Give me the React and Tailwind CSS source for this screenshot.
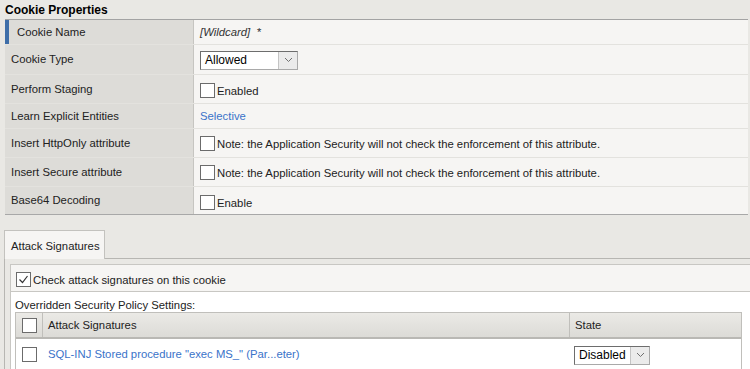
import React from "react";

function Box({ checked = false }) {
  return (
    <span className="inline-flex items-center justify-center w-[15px] h-[15px] bg-white border border-[#6b6b6b] shrink-0">
      {checked && (
        <svg width="11" height="11" viewBox="0 0 11 11">
          <path d="M1.5 5.5 L4.5 8.5 L9.5 2" fill="none" stroke="#333" strokeWidth="1.2" />
        </svg>
      )}
    </span>
  );
}

function Select({ value, width }) {
  return (
    <span className={`inline-flex items-stretch h-[19px] bg-white border border-[#a9a9a9] border-t-[#6d6d6d] border-l-[#6d6d6d] ${width}`}>
      <span className="flex-1 pl-[4px] leading-[17px] text-[12px] text-black">{value}</span>
      <span className="w-[19px] flex items-center justify-center bg-[#ebebeb] border-l border-[#c4c4c4]">
        <svg width="9" height="6" viewBox="0 0 9 6">
          <path d="M1 1 L4.5 4.5 L8 1" fill="none" stroke="#707070" strokeWidth="1" />
        </svg>
      </span>
    </span>
  );
}

function Row({ label, h, children, active = false, last = false }) {
  return (
    <div className={`flex ${last ? "" : "border-b border-[#e3e2de]"} ${h}`}>
      <div className={`w-[189px] shrink-0 bg-[#dddcd8] border-r border-[#c6c5c1] flex items-center ${active ? "border-l-[4px] border-l-[#3e6ea8] pl-[8px]" : "pl-[6px]"}`}>
        {label}
      </div>
      <div className="flex-1 bg-[#f6f5f3] flex items-center pl-[6px]">{children}</div>
    </div>
  );
}

const note = "Note: the Application Security will not check the enforcement of this attribute.";

export default function App() {
  return (
    <div className="w-[750px] h-[369px] overflow-hidden bg-[#e9e8e4] text-[11.3px] text-[#222] font-['Liberation_Sans',Arial,sans-serif]">
      <div className="h-[19px] pl-[5px] pt-[1px] font-bold text-[12px] text-black">Cookie Properties</div>
      <div className="ml-[5px] mr-[2px] border-t border-[#a3a3a3] border-b border-b-[#a8a8a8]">
        <Row label="Cookie Name" h="h-[25px]" active>
          <span className="italic text-[#333]">[Wildcard]&nbsp; *</span>
        </Row>
        <Row label="Cookie Type" h="h-[30px]">
          <Select value="Allowed" width="w-[98px] mt-[1px]" />
        </Row>
        <Row label="Perform Staging" h="h-[29px]">
          <span className="flex items-end gap-[2px] mt-[3px]">
            <Box />
            <span className="leading-[13px]">Enabled</span>
          </span>
        </Row>
        <Row label="Learn Explicit Entities" h="h-[25px]">
          <span className="text-[#3a73c9]">Selective</span>
        </Row>
        <Row label="Insert HttpOnly attribute" h="h-[29px]">
          <span className="flex items-end gap-[2px]">
            <Box />
            <span className="leading-[13px]">{note}</span>
          </span>
        </Row>
        <Row label="Insert Secure attribute" h="h-[29px]">
          <span className="flex items-end gap-[2px]">
            <Box />
            <span className="leading-[13px]">{note}</span>
          </span>
        </Row>
        <Row label="Base64 Decoding" h="h-[27px]" last>
          <span className="flex items-end gap-[2px] mt-[3px]">
            <Box />
            <span className="leading-[13px]">Enable</span>
          </span>
        </Row>
      </div>

      <div className="mt-[14px] ml-[4px]">
        <div className="w-[101px] h-[29px] bg-[#f6f5f3] border border-b-0 border-[#c3c2be] pl-[6px] pt-[7px] whitespace-nowrap relative top-[1px]">
          Attack Signatures
        </div>
        <div className="border-t border-l border-[#b7b6b2] pt-[5px] pl-[5px]">
          <div className="bg-[#f6f5f3] border-t border-l border-b border-[#c8c7c3] h-[28px] flex items-end pb-[4px] pl-[5px] gap-[2px]">
            <Box checked />
            <span className="leading-[13px]">Check attack signatures on this cookie</span>
          </div>
          <div className="bg-white border-l border-[#c8c7c3] pl-[4px] pt-[7px]">
            <div className="leading-[13px]">Overridden Security Policy Settings:</div>
            <div className="w-[727px] border border-[#c0bfbb]">
              <div className="flex h-[26px] bg-gradient-to-b from-[#ebeae6] to-[#dcdbd7] border-b-2 border-[#b9b8b4]">
                <div className="w-[27px] flex items-center justify-center border-r border-[#c0bfbb]">
                  <Box />
                </div>
                <div className="flex-1 flex items-center pl-[5px] text-[#222]">Attack Signatures</div>
                <div className="w-[172px] flex items-center pl-[5px] border-l border-[#c0bfbb]">State</div>
              </div>
              <div className="flex h-[30px] bg-white">
                <div className="w-[27px] flex items-center justify-center">
                  <Box />
                </div>
                <div className="flex-1 flex items-center pl-[5px] text-[#3a73c9]">
                  SQL-INJ Stored procedure "exec MS_" (Par...eter)
                </div>
                <div className="w-[172px] flex items-center pl-[5px] pt-[2px]">
                  <Select value="Disabled" width="w-[76px]" />
                </div>
              </div>
            </div>
          </div>
        </div>
      </div>
    </div>
  );
}
